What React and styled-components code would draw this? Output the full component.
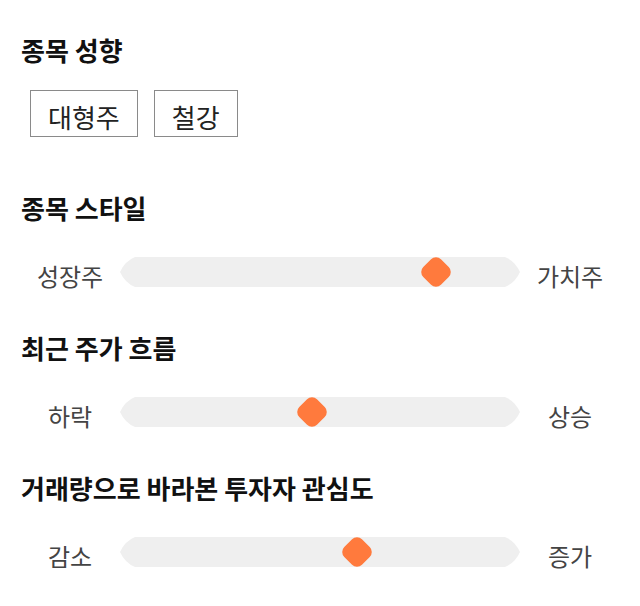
import React from "react";
import styled, { createGlobalStyle } from "styled-components";

const Global = createGlobalStyle`
  html, body { margin: 0; padding: 0; background: #fff; }
  body { font-family: "Noto Sans CJK KR", "Noto Sans", sans-serif; }
`;

const Page = styled.div`
  width: 640px;
  padding: 34px 20px 0 20px;
  box-sizing: border-box;
`;

const Section = styled.section`
  display: flex;
  flex-direction: column;
  margin-bottom: ${(p) => p.$after || 40}px;
`;

const Heading = styled.h2`
  margin: 0 0 0 1px;
  font-size: 26px;
  line-height: 32px;
  font-weight: 700;
  color: #111;
`;

const Tags = styled.div`
  display: flex;
  gap: 16px;
  margin: 24px 0 0 10px;
`;

const Tag = styled.span`
  border: 1px solid #8a8a8a;
  padding: 11px 17px 4px;
  line-height: 30px;
  font-size: 26px;
  color: #222;
`;

const Row = styled.div`
  display: flex;
  align-items: center;
  height: 40px;
  margin-top: 28px;
`;

const Label = styled.span`
  width: 100px;
  text-align: center;
  font-size: 24px;
  line-height: 30px;
  color: #444;
  padding-top: 8px;
`;

const Track = styled.div`
  position: relative;
  flex: 1;
  height: 30px;
  &::before {
    content: "";
    position: absolute;
    inset: 0;
    background: #efefef;
    clip-path: path("M15 0 H385 Q395 4 400 15 Q395 26 385 30 H15 Q5 26 0 15 Q5 4 15 0 Z");
  }
`;

const Thumb = styled.div`
  position: absolute;
  top: 50%;
  width: 25px;
  height: 25px;
  background: #ff7a3d;
  border-radius: 7px;
  transform: translate(-50%, -50%) rotate(45deg);
`;

const Slider = ({ left, right, value }) => (
  <Row>
    <Label>{left}</Label>
    <Track>
      <Thumb style={{ left: `${value}%` }} />
    </Track>
    <Label>{right}</Label>
  </Row>
);

export default function App() {
  return (
    <Page>
      <Global />
      <Section $after={55}>
        <Heading>종목 성향</Heading>
        <Tags>
          <Tag>대형주</Tag>
          <Tag>철강</Tag>
        </Tags>
      </Section>
      <Section>
        <Heading>종목 스타일</Heading>
        <Slider left="성장주" right="가치주" value={79} />
      </Section>
      <Section>
        <Heading>최근 주가 흐름</Heading>
        <Slider left="하락" right="상승" value={48} />
      </Section>
      <Section>
        <Heading>거래량으로 바라본 투자자 관심도</Heading>
        <Slider left="감소" right="증가" value={59.25} />
      </Section>
    </Page>
  );
}
